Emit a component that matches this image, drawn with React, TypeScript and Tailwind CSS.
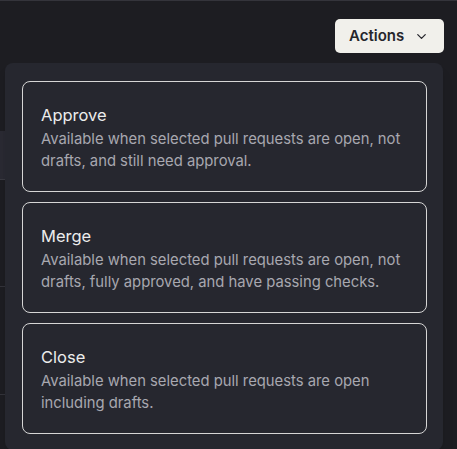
import { ChevronDown } from "lucide-react";

const actions = [
  {
    title: "Approve",
    description:
      "Available when selected pull requests are open, not drafts, and still need approval.",
  },
  {
    title: "Merge",
    description:
      "Available when selected pull requests are open, not drafts, fully approved, and have passing checks.",
  },
  {
    title: "Close",
    description:
      "Available when selected pull requests are open including drafts.",
  },
];

const App = () => {
  return (
    <div
      className="relative w-[457px] h-[449px] overflow-hidden bg-[#1d1d22] border-t border-[#34343b]"
      style={{ fontFamily: "Inter, 'Noto Sans', sans-serif" }}
    >
      {/* Toolbar */}
      <div className="flex justify-end pt-[18px] pr-[13px]">
        <button className="flex items-center gap-[10px] h-[34px] w-[109px] pl-[14px] rounded-[5px] bg-[#f1f0eb] text-[#26262c] text-[15px] font-semibold">
          Actions
          <ChevronDown size={15} strokeWidth={2} />
        </button>
      </div>

      {/* Table behind the menu */}
      <div className="w-[400px] mt-[78px]">
        <div className="h-[49px] bg-[#2a2a33] border-b border-[#3a3a42]" />
        <div className="h-[107px] border-b border-[#33333a]" />
        <div className="h-[108px] border-b border-[#33333a]" />
      </div>

      {/* Dropdown menu */}
      <div className="absolute left-[5px] top-[62px] w-[438px] rounded-lg bg-[#26272f] pl-[17px] pr-[16px] pt-[18px] pb-4 flex flex-col gap-[10px] shadow-lg">
        {actions.map((a) => (
          <div
            key={a.title}
            className="rounded-lg border border-[#d6d6d6] pl-[18px] pr-4 pt-[21px] pb-[19px]"
          >
            <div className="text-[16.5px] leading-6 text-[#ececec]">{a.title}</div>
            <p className="mt-px text-[14.8px] leading-[22px] text-[#a8a8b0]">
              {a.description}
            </p>
          </div>
        ))}
      </div>
    </div>
  );
};

export default App;
